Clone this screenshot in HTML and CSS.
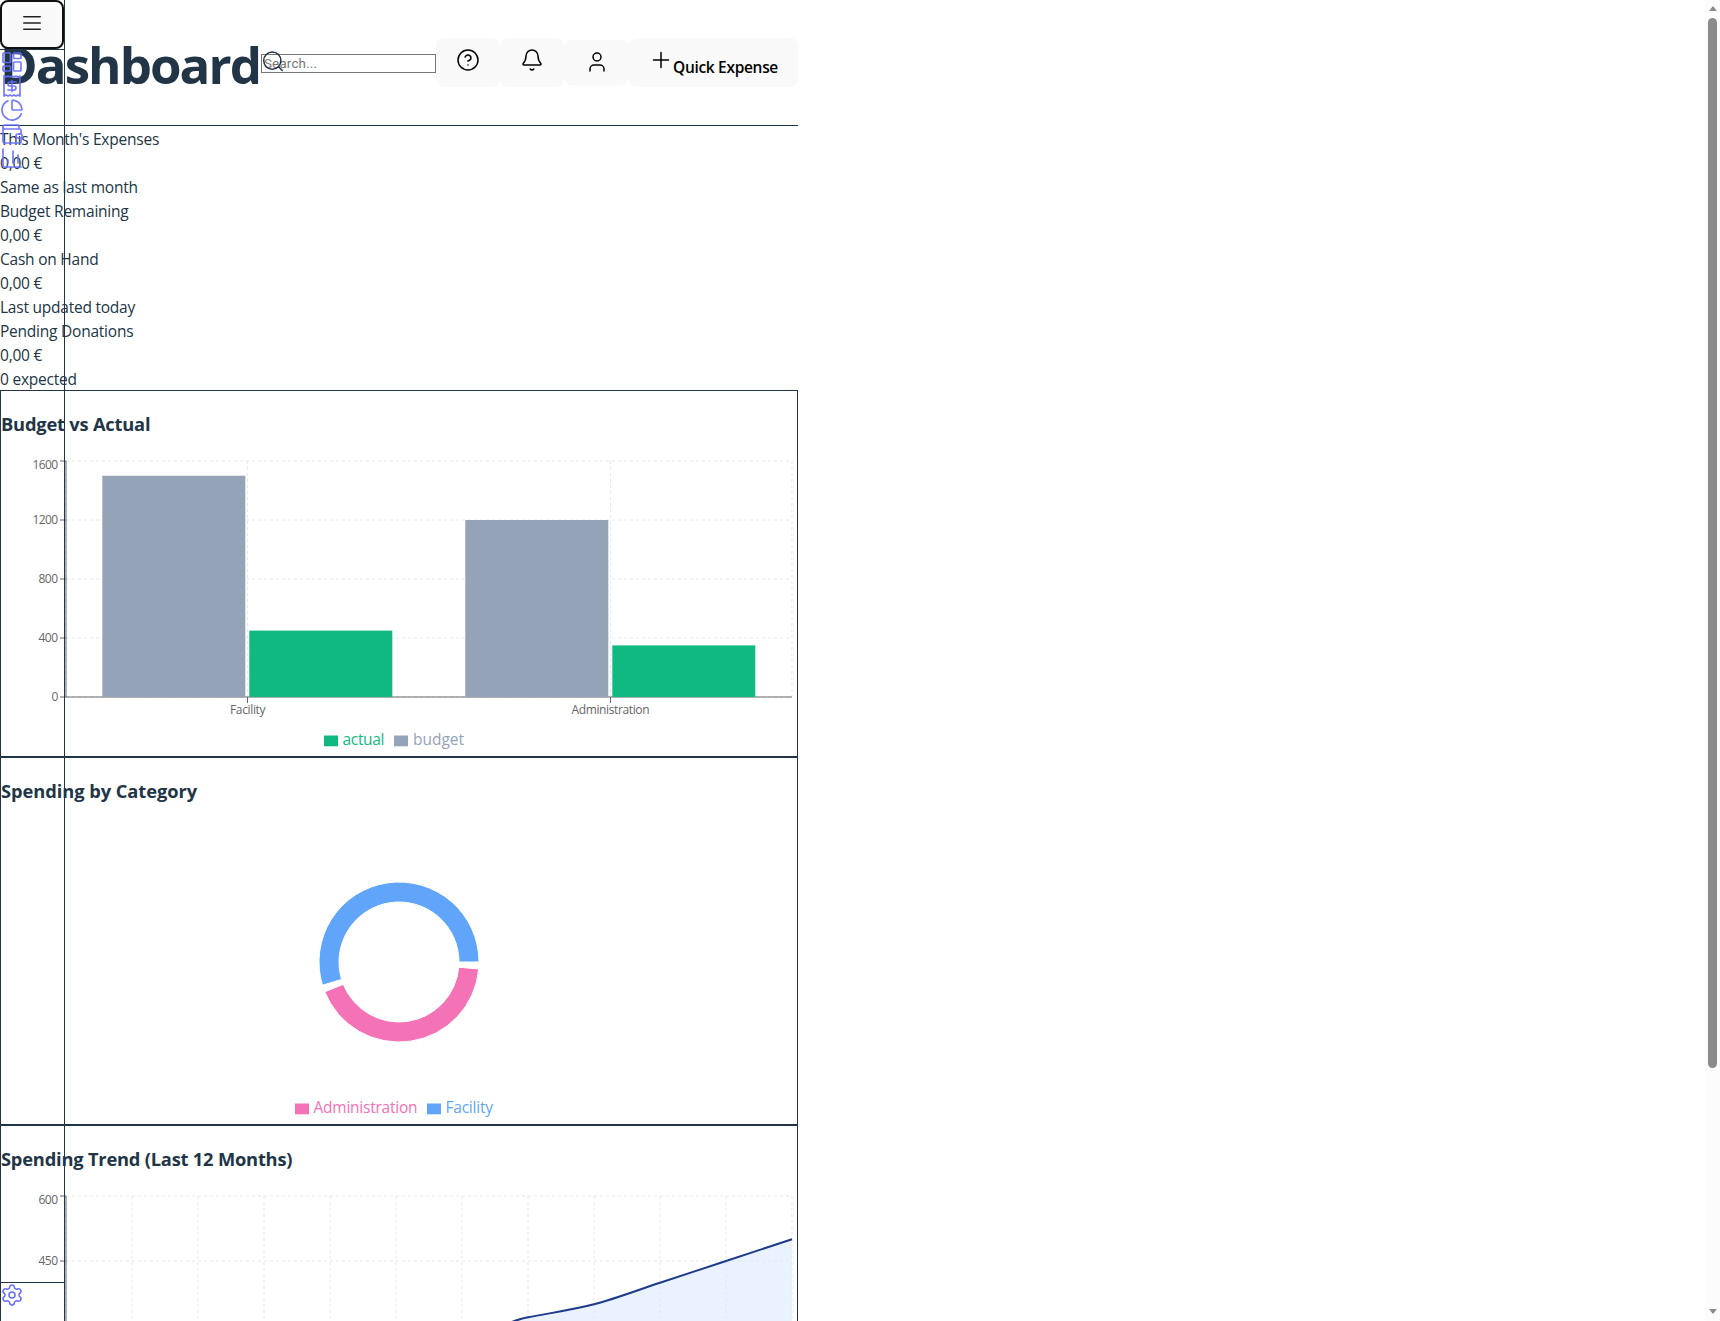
FILE: index.html
```html
<!DOCTYPE html>
<html lang="en">
<head>
<meta charset="utf-8">
<title>Dashboard</title>
<link rel="stylesheet" href="styles.css">
</head>
<body>
<main class="page">
  <header class="header">
    <h1 class="title">Dashboard</h1>
    <div class="search">
      <input class="search-input" type="text" placeholder="Search...">
      <svg class="icon search-icon" viewBox="0 0 24 24"><circle cx="11.300" cy="10.600" r="8.600"/><path d="M17.500 16.700L21.300 20.500"/></svg>
    </div>
    <button class="btn"><svg class="icon" viewBox="0 0 24 24"><circle cx="12" cy="12" r="10"/><path d="M9.090 9a3 3 0 0 1 5.830 1c0 2-3 3-3 3M12 17h.01"/></svg></button>
    <button class="btn"><svg class="icon" viewBox="0 0 24 24"><path d="M10.268 21a2 2 0 0 0 3.464 0M3.262 15.326A1 1 0 0 0 4 17h16a1 1 0 0 0 .74-1.673C19.410 13.956 18 12.499 18 8A6 6 0 0 0 6 8c0 4.499-1.411 5.956-2.738 7.326"/></svg></button>
    <button class="btn btn-user"><svg class="icon" viewBox="0 0 24 24"><circle cx="12" cy="7" r="4"/><path d="M19 21v-2a4 4 0 0 0-4-4H9a4 4 0 0 0-4 4v2"/></svg></button>
    <button class="btn btn-quick"><svg class="icon" viewBox="0 0 24 24"><path d="M12 4.500v15M4.500 12h15"/></svg><span>Quick Expense</span></button>
  </header>

  <section class="stats">
    <div>This Month's Expenses</div>
    <div>0,00 €</div>
    <div>Same as last month</div>
    <div>Budget Remaining</div>
    <div>0,00 €</div>
    <div>Cash on Hand</div>
    <div>0,00 €</div>
    <div>Last updated today</div>
    <div>Pending Donations</div>
    <div>0,00 €</div>
    <div>0 expected</div>
  </section>

  <section class="card">
    <h3>Budget vs Actual</h3>
    <svg class="chart" viewBox="0 0 796 300">
      <g class="grid">
        <path d="M65 5H791M65 64H791M65 123H791M65 182H791M65 241H791"/>
        <path d="M246.500 5V241M609.500 5V241M65 5V241M791 5V241"/>
      </g>
      <path class="axis" d="M65 241H791M65 5V241M59 5h6M59 64h6M59 123h6M59 182h6M59 241h6M246.500 241v6M609.500 241v6"/>
      <g class="bar-budget"><rect x="101.300" y="19.750" width="143" height="221.250"/><rect x="464.300" y="64" width="143" height="177"/></g>
      <g class="bar-actual"><rect x="248.300" y="174.600" width="143" height="66.400"/><rect x="611.300" y="189.400" width="143" height="51.600"/></g>
      <g class="tick">
        <text x="31.500" y="12.500" textLength="25.500">1600</text>
        <text x="31.500" y="68" textLength="25.500">1200</text>
        <text x="37.500" y="127" textLength="19.500">800</text>
        <text x="37.500" y="186" textLength="19.500">400</text>
        <text x="50.500" y="245" textLength="6.500">0</text>
        <text x="229" y="258" textLength="35.500">Facility</text>
        <text x="570.500" y="258" textLength="78">Administration</text>
      </g>
      <g class="legend">
        <rect class="bar-actual" x="323" y="279.500" width="14" height="10.800"/>
        <text class="bar-actual" x="341.500" y="289" textLength="42">actual</text>
        <rect class="bar-budget" x="393" y="279.500" width="14" height="10.800"/>
        <text class="bar-budget" x="412" y="289" textLength="51">budget</text>
      </g>
    </svg>
  </section>

  <section class="card">
    <h3 class="category-title">Spending by Category</h3>
    <svg class="chart" viewBox="0 0 796 300">
      <g class="pie">
        <path class="facility" d="M478 138A80 80 0 1 0 321.440 161.220L340.580 155.410A60 60 0 1 1 458 138Z"/>
        <path class="admin" d="M323.760 167.800A80 80 0 0 0 477.700 144.970L457.770 143.230A60 60 0 0 1 342.320 160.350Z"/>
      </g>
      <g class="legend">
        <rect class="admin" x="294" y="279.500" width="14" height="10.800"/>
        <text class="admin" x="312.500" y="289" textLength="104">Administration</text>
        <rect class="facility" x="426" y="279.500" width="14" height="10.800"/>
        <text class="facility" x="444.500" y="289" textLength="47.500">Facility</text>
      </g>
    </svg>
  </section>

  <section class="card">
    <h3>Spending Trend (Last 12 Months)</h3>
    <svg class="chart" viewBox="0 0 796 300">
      <g class="grid">
        <path d="M65 5H791M65 70H791M65 135H791M65 200H791M65 265H791"/>
        <path d="M65 5V265M131 5V265M197 5V265M263 5V265M329 5V265M395 5V265M461 5V265M527 5V265M593 5V265M659 5V265M725 5V265M791 5V265"/>
      </g>
      <path class="axis" d="M65 265H791M65 5V265M59 5h6M59 70h6M59 135h6M59 200h6M59 265h6"/>
      <path class="area" d="M461 152C483 143.500 505 130.500 527 126.300C549 122 571 119 593 113.300C615 107.500 637 98.900 659 91.700C681 84.500 703 77.200 725 70C747 62.800 769 55.500 791 48.300V265H461Z"/>
      <path class="line" d="M461 152C483 143.500 505 130.500 527 126.300C549 122 571 119 593 113.300C615 107.500 637 98.900 659 91.700C681 84.500 703 77.200 725 70C747 62.800 769 55.500 791 48.300"/>
      <g class="tick">
        <text x="37.500" y="13" textLength="19.500">600</text>
        <text x="37.500" y="74" textLength="19.500">450</text>
      </g>
    </svg>
  </section>
</main>

<aside class="sidebar">
  <div class="sidebar-top">
    <button class="btn menu-btn"><svg class="icon" viewBox="0 0 24 24"><path d="M3.750 5.750h16.500M3.750 12h16.500M3.750 18.250h16.500"/></svg></button>
  </div>
  <nav class="nav">
    <svg class="icon" viewBox="0 0 24 24"><rect x="3" y="3" width="7.500" height="9.500" rx="1"/><rect x="13.500" y="3" width="7.500" height="5.500" rx="1"/><rect x="13.500" y="12" width="7.500" height="9" rx="1"/><rect x="3" y="16" width="7.500" height="5" rx="1"/></svg>
    <svg class="icon" viewBox="0 0 24 24"><path d="M4 2v20l2-1 2 1 2-1 2 1 2-1 2 1 2-1 2 1V2l-2 1-2-1-2 1-2-1-2 1-2-1-2 1ZM16 8h-6a2 2 0 1 0 0 4h4a2 2 0 1 1 0 4H8M12 17.500v-11"/></svg>
    <svg class="icon" viewBox="0 0 24 24"><path d="M21 12c.552 0 1.005-.449.950-.998a10 10 0 0 0-8.953-8.951c-.55-.055-.998.398-.998.950v8a1 1 0 0 0 1 1zM21.210 15.890A10 10 0 1 1 8 2.830"/></svg>
    <svg class="icon" viewBox="0 0 24 24"><path d="M19 7V4a1 1 0 0 0-1-1H5a2 2 0 0 0 0 4h15a1 1 0 0 1 1 1v4h-3a2 2 0 0 0 0 4h3a1 1 0 0 0 1-1v-2a1 1 0 0 0-1-1M3 5v14a2 2 0 0 0 2 2h15a1 1 0 0 0 1-1v-4"/></svg>
    <svg class="icon" viewBox="0 0 24 24"><path d="M3 3v16a2 2 0 0 0 2 2h16M18 17V9M13 17V5M8 17v-3"/></svg>
  </nav>
  <div class="sidebar-bottom">
    <svg class="icon" viewBox="0 0 24 24"><circle cx="12" cy="12" r="3"/><path d="M9.671 4.136a2.340 2.340 0 0 1 4.659 0 2.340 2.340 0 0 0 3.319 1.915 2.340 2.340 0 0 1 2.330 4.033 2.340 2.340 0 0 0 0 3.831 2.340 2.340 0 0 1-2.330 4.033 2.340 2.340 0 0 0-3.319 1.915 2.340 2.340 0 0 1-4.659 0 2.340 2.340 0 0 0-3.320-1.915 2.340 2.340 0 0 1-2.330-4.033 2.340 2.340 0 0 0 0-3.831A2.340 2.340 0 0 1 6.350 6.051a2.340 2.340 0 0 0 3.319-1.915"/></svg>
  </div>
</aside>

<div class="scrollbar"><i class="arrow up"></i><i class="thumb"></i><i class="arrow down"></i></div>
</body>
</html>
```
FILE: styles.css
```css
* { box-sizing: border-box; }
html, body { height: 100%; overflow: hidden; }
body {
  margin: 0;
  background: #fff;
  color: #213547;
  font: 400 15.5px/24px "Open Sans", "Noto Sans", sans-serif;
}
.page { width: 798px; height: 100%; overflow: hidden; }
.icon {
  width: 24px;
  height: 24px;
  fill: none;
  stroke: currentColor;
  stroke-width: 1.5;
  stroke-linecap: round;
  stroke-linejoin: round;
  display: block;
  flex: none;
}
.header {
  display: flex;
  align-items: center;
  height: 125.930px;
  border-bottom: 1px solid #213547;
}
.title {
  margin: 4px 0 0;
  width: 261px;
  font-size: 51px;
  line-height: 1.1;
  font-weight: 700;
  letter-spacing: -1.950px;
  white-space: nowrap;
}
.search { position: relative; width: 175px; height: 19px; margin-top: 2px; }
.search-input {
  display: block;
  width: 175px;
  height: 19px;
  padding: 0 2px;
  border: 1px solid #767676;
  background: #fff;
  font: 13.333px Roboto, sans-serif;
  letter-spacing: .2px;
}
.search-input::placeholder { color: #757575; }
.search-icon { position: absolute; left: 0; top: -4px; }
.btn {
  display: flex;
  justify-content: center;
  width: 64.200px;
  height: 49px;
  padding: 10px 0 0;
  border: 0;
  border-radius: 8px;
  background: #f9f9f9;
  color: #000;
  font: 600 15.5px/24px "Open Sans", "Noto Sans", sans-serif;
}
.btn-user { height: 45px; margin-top: 1px; padding-left: 1px; }
.btn-quick { width: auto; flex: 1; justify-content: flex-start; padding-left: 20px; letter-spacing: -.32px; white-space: nowrap; }
.btn-quick span { padding-top: 7px; margin-left: .5px; }
.stats { height: 264px; padding-top: 1px; letter-spacing: -.23px; }
.card { height: 367.520px; border: 1px solid #213547; padding-top: 18.720px; }
.card h3 { margin: 0 0 18.720px; font-size: 18.300px; line-height: 28.080px; font-weight: 700; letter-spacing: -.2px; }
.card .category-title { letter-spacing: -.06px; }
.chart { display: block; width: 796px; height: 300px; }
.grid path { fill: none; stroke: #e2e8f0; stroke-dasharray: 3 3; }
.axis { fill: none; stroke: #666; }
.tick { font-size: 12px; fill: #666; }
.legend { font-size: 15.500px; }
.bar-budget { fill: #94a3b8; }
.bar-actual { fill: #10b981; }
.pie path { stroke: #fff; }
.facility { fill: #60a5fa; }
.admin { fill: #f472b6; }
.area { fill: #dbeafe; fill-opacity: .6; }
.line { fill: none; stroke: #1e3a8a; stroke-width: 2; }
.sidebar {
  position: fixed;
  left: 0;
  top: 0;
  bottom: 0;
  width: 65px;
  border-right: 1px solid #213547;
  display: flex;
  flex-direction: column;
  color: #646cff;
}
.sidebar-top { height: 50px; border-bottom: 1px solid #213547; }
.menu-btn { width: 64px; border: 2px solid #101010; padding-top: 9px; color: #222; }
.nav { flex: 1; }
.nav .icon { stroke-width: 1.700; opacity: .9; }
.sidebar-bottom { height: 39px; border-top: 1px solid #213547; }
.scrollbar {
  position: fixed;
  right: 0;
  top: 0;
  bottom: 0;
  width: 15px;
  background: #fcfcfc;
  display: flex;
  flex-direction: column;
  align-items: center;
  padding: 6px 0 7px;
}
.thumb { width: 9px; height: 1050px; margin: 7px 0 auto; border-radius: 5px; background: #8b8b8b; }
.arrow { border: 4.500px solid transparent; }
.up { border-top: 0; border-bottom: 5px solid #8b8b8b; }
.down { border-bottom: 0; border-top: 5px solid #8b8b8b; }
```
